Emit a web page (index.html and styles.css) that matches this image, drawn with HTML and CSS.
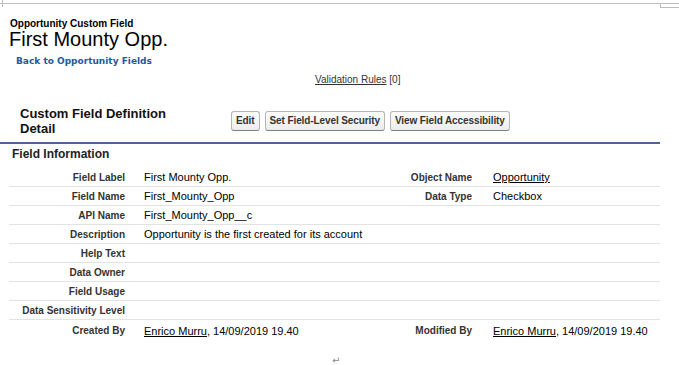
FILE: index.html
```html
<!DOCTYPE html>
<html>
<head>
<meta charset="utf-8">
<link rel="stylesheet" href="styles.css">
</head>
<body>
<div class="page">
  <div class="marks">
    <span class="m-a"></span>
    <span class="m-b"></span>
    <span class="m-c"></span>
    <span class="m-d"></span>
  </div>
  <div class="pt-header">
    <div class="pt-type">Opportunity Custom Field</div>
    <h1 class="pt-title">First Mounty Opp.</h1>
    <a class="pt-back" href="#">Back to Opportunity Fields</a>
  </div>
  <div class="related"><a href="#">Validation Rules</a> [0]</div>
  <div class="pb">
    <div class="pb-header">
      <h2 class="pb-title">Custom Field Definition<br>Detail</h2>
      <div class="pb-buttons">
        <button class="btn">Edit</button>
        <button class="btn">Set Field-Level Security</button>
        <button class="btn">View Field Accessibility</button>
      </div>
    </div>
    <h3 class="section">Field Information</h3>
    <table class="detail">
      <colgroup>
        <col class="c1"><col class="c2"><col class="c3"><col class="c4">
      </colgroup>
      <tr><td class="lbl">Field Label</td><td class="val">First Mounty Opp.</td><td class="lbl">Object Name</td><td class="val"><a href="#">Opportunity</a></td></tr>
      <tr><td class="lbl">Field Name</td><td class="val">First_Mounty_Opp</td><td class="lbl">Data Type</td><td class="val">Checkbox</td></tr>
      <tr><td class="lbl">API Name</td><td class="val">First_Mounty_Opp__c</td><td class="lbl"></td><td class="val"></td></tr>
      <tr><td class="lbl">Description</td><td class="val">Opportunity is the first created for its account</td><td class="lbl"></td><td class="val"></td></tr>
      <tr><td class="lbl">Help Text</td><td class="val"></td><td class="lbl"></td><td class="val"></td></tr>
      <tr><td class="lbl">Data Owner</td><td class="val"></td><td class="lbl"></td><td class="val"></td></tr>
      <tr><td class="lbl">Field Usage</td><td class="val"></td><td class="lbl"></td><td class="val"></td></tr>
      <tr><td class="lbl">Data Sensitivity Level</td><td class="val"></td><td class="lbl"></td><td class="val"></td></tr>
      <tr class="last"><td class="lbl">Created By</td><td class="val"><a href="#">Enrico Murru</a>, 14/09/2019 19.40</td><td class="lbl">Modified By</td><td class="val"><a href="#">Enrico Murru</a>, 14/09/2019 19.40</td></tr>
    </table>
  </div>
  <div class="para-mark">↵</div>
</div>
</body>
</html>
```
FILE: styles.css
```css
html, body {
  margin: 0;
  padding: 0;
  background: #fff;
}
body {
  font-family: "Liberation Sans", Arial, sans-serif;
  color: #000;
}
.page {
  width: 679px;
  height: 365px;
  overflow: hidden;
}

/* Word crop marks */
.marks {
  display: flex;
  height: 8px;
}
.marks span { display: block; flex: none; }
.m-a {
  width: 2px;
  height: 3px;
  border-bottom: 1px solid #bdbdbd;
}
.m-b {
  width: 0;
  height: 7px;
  border-left: 1px solid #bdbdbd;
}
.m-c {
  flex: 1 1 auto !important;
  height: 3px;
  border-bottom: 1px solid #bdbdbd;
}
.m-d {
  width: 18px;
  height: 3px;
  margin-top: 3px;
  border: 1px solid #bdbdbd;
  border-right: none;
}

/* Page header */
.pt-header {
  padding: 10px 0 0 9px;
}
.pt-type {
  font-size: 10px;
  line-height: 11px;
  font-weight: bold;
  padding-left: 1px;
}
.pt-title {
  margin: 0;
  font-size: 20px;
  line-height: 20px;
  font-weight: normal;
}
.pt-back {
  display: block;
  margin: 6px 0 0 7px;
  font-family: "DejaVu Sans", Verdana, sans-serif;
  font-size: 9px;
  line-height: 12px;
  font-weight: bold;
  color: #1d5a9e;
  text-decoration: none;
}

.related {
  margin-top: 7px;
  padding-left: 315px;
  font-size: 10px;
  line-height: 12px;
  color: #333;
}
.related a {
  color: #333;
  text-decoration: underline;
}

/* Page block */
.pb {
  margin-top: 20px;
  width: 660px;
}
.pb-header {
  display: flex;
  align-items: center;
  padding: 0 0 6px 20px;
  border-bottom: 2px solid #4f6399;
}
.pb-title {
  flex: none;
  width: 211px;
  margin: 0;
  font-size: 13px;
  line-height: 15px;
  font-weight: bold;
  color: #111;
}
.pb-buttons {
  display: flex;
  gap: 5px;
}
.btn {
  font-family: "Liberation Sans", Arial, sans-serif;
  font-size: 10px;
  line-height: 12px;
  font-weight: bold;
  letter-spacing: -0.1px;
  color: #333;
  padding: 3px 4px;
  margin: 0;
  border: 1px solid #b5b5b5;
  border-bottom-color: #7f7f7f;
  border-radius: 3px;
  background: linear-gradient(#fdfdfd, #ececec);
}

.section {
  margin: 3px 0 0 12px;
  font-size: 12px;
  line-height: 14px;
  font-weight: bold;
  color: #222;
}

.detail {
  margin: 7px 0 0 9px;
  width: 651px;
  border-collapse: collapse;
  table-layout: fixed;
}
.detail col.c1 { width: 126px; }
.detail col.c2 { width: 235px; }
.detail col.c3 { width: 112px; }
.detail col.c4 { width: 178px; }
.detail td {
  height: 18px;
  padding: 0;
  border-bottom: 1px solid #e3e3e3;
  white-space: nowrap;
  vertical-align: middle;
}
.detail tr.last td {
  height: 21px;
  border-bottom: none;
}
.detail td.lbl {
  text-align: right;
  padding-right: 10px;
  font-size: 10px;
  font-weight: bold;
  color: #333;
}
.detail td.val {
  padding-left: 9px;
  font-size: 11px;
  color: #000;
}
.detail td:nth-child(4) {
  padding-left: 11px;
}
.detail a {
  color: #000;
  text-decoration: underline;
}

.para-mark {
  margin-top: 14px;
  padding-left: 332px;
  font-family: "DejaVu Sans", sans-serif;
  font-size: 10px;
  line-height: 12px;
  color: #8a8a8a;
}
```
